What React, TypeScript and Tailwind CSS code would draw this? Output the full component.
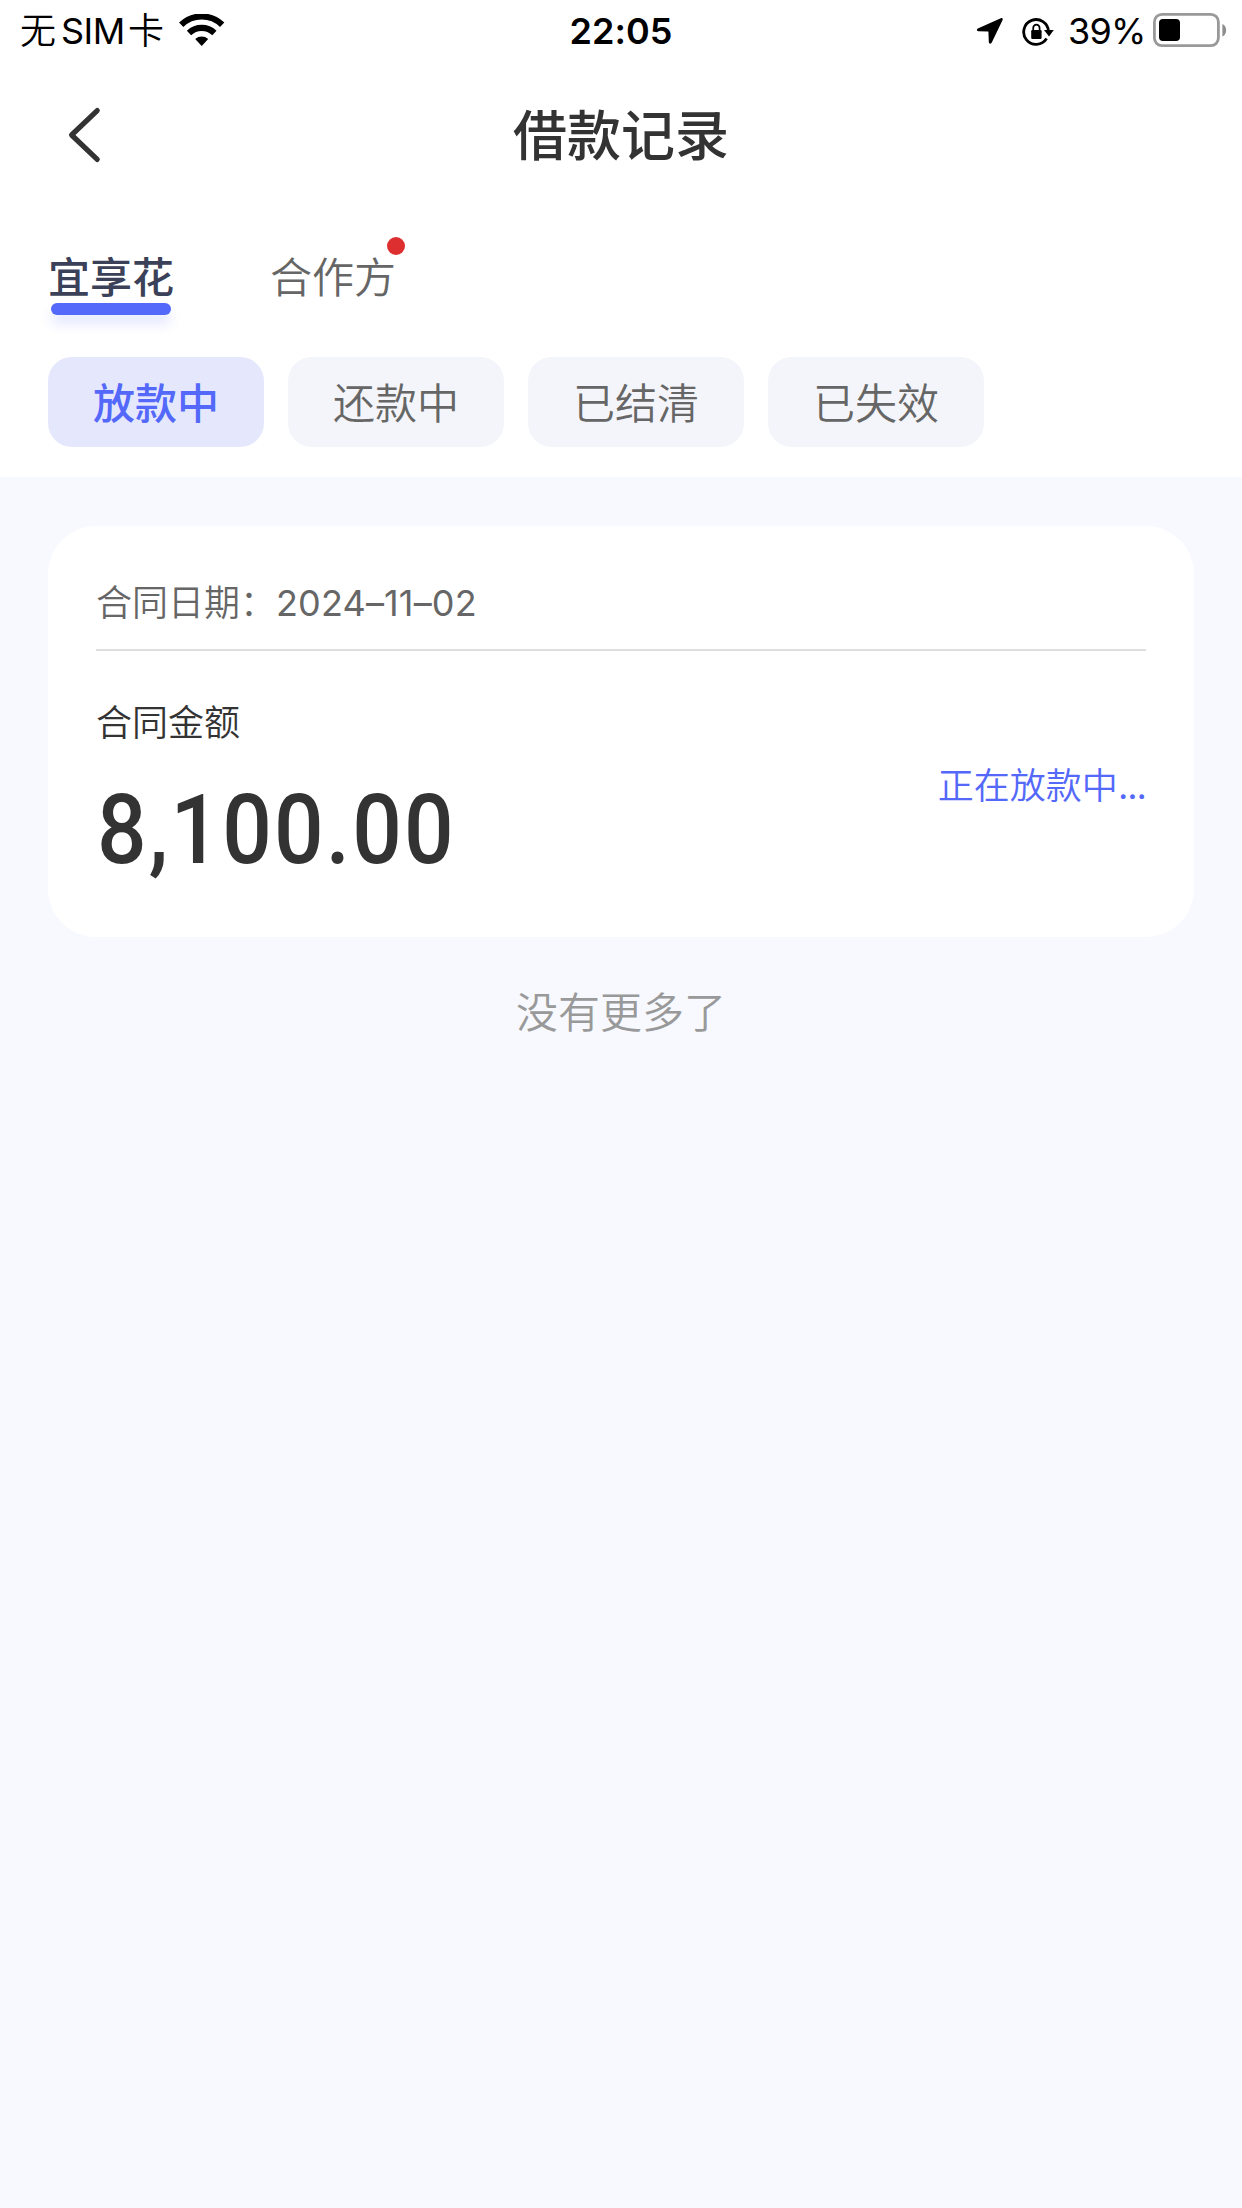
import React from "react";

const filters = ["放款中", "还款中", "已结清", "已失效"];

function WifiIcon() {
  return (
    <svg className="ml-[15px] h-[34px] w-[46px]" viewBox="0 0 46 34" fill="none">
      <path d="M2.2 10.8 A29.5 29.5 0 0 1 43.2 10.8" stroke="#000" strokeWidth="6.2" />
      <path d="M10 18.9 A18.4 18.4 0 0 1 35.4 18.9" stroke="#000" strokeWidth="6.2" />
      <path d="M16.2 25 A10 10 0 0 1 29.2 25 L22.7 32 Z" fill="#000" />
    </svg>
  );
}

function LocationIcon() {
  return (
    <svg className="-mt-[2px] mr-px h-[28px] w-[28px]" viewBox="0 0 28 28">
      <path
        d="M24.8 1.2 L1.8 11.6 C0.3 12.4 0.6 14.2 2.3 14.3 L12.4 14.5 L12.8 25 C12.9 27 15 27.2 15.8 25.6 L26.6 3 C27.2 1.6 26.2 0.6 24.8 1.2 Z"
        fill="#000"
      />
    </svg>
  );
}

function RotationLockIcon() {
  return (
    <svg className="ml-[17px] h-[30px] w-[32px]" viewBox="0 0 32 30" fill="none">
      <path d="M26.5 14.5 A12.4 12.4 0 1 0 24.6 21.6" stroke="#000" strokeWidth="2.8" />
      <path d="M22 13 H31.8 L27 19.6 Z" fill="#000" />
      <rect x="9.2" y="13" width="10.4" height="9" rx="1.2" fill="#000" />
      <path d="M11.2 13.5 V11 A3.2 3.4 0 0 1 17.6 11 V13.5" stroke="#000" strokeWidth="1.7" />
    </svg>
  );
}

function BatteryIcon() {
  return (
    <svg className="-mt-[4px] ml-[8px] h-[36px] w-[75px]" viewBox="0 0 75 36" fill="none">
      <rect x="1.4" y="2.4" width="64" height="31.2" rx="7.5" stroke="#999" strokeWidth="2.8" />
      <rect x="6" y="7" width="21" height="22" rx="4" fill="#000" />
      <path d="M69.4 12 C74.4 13.6 74.4 22.8 69.4 24.4 Z" fill="#8e8e8e" />
    </svg>
  );
}

export default function App() {
  return (
    <div className="flex h-[2208px] w-[1242px] flex-col overflow-hidden bg-[#f8f9ff] font-['Inter','Noto_Sans_CJK_SC',sans-serif] text-[#333333]">
      <header className="h-[477px] shrink-0 bg-white">
        <div className="grid h-[60px] grid-cols-[1fr_auto_1fr] items-center text-[36px] leading-[60px] text-black">
          <div className="flex items-center pl-[20px] pt-[1px]">
            <span className="font-[350]">无</span>
            <span className="ml-[5px] w-[63px] tracking-[-0.5px]">SIM</span>
            <span className="ml-[4px] font-[350]">卡</span>
            <WifiIcon />
          </div>
          <div className="pt-px font-semibold tracking-[0.1px]">22:05</div>
          <div className="flex items-center justify-end pr-[14px] pt-[2px]">
            <LocationIcon />
            <RotationLockIcon />
            <span className="-mt-px ml-[14px] w-[77px] tracking-[-0.8px]">39%</span>
            <BatteryIcon />
          </div>
        </div>

        <div className="grid h-[150px] grid-cols-[1fr_auto_1fr] items-center">
          <button className="ml-[66px] w-[36px]" aria-label="返回">
            <svg className="h-[60px] w-[36px]" viewBox="0 0 36 60" fill="none">
              <path
                d="M31.2 5.6 L5.6 30 L31.2 54.4"
                stroke="#333"
                strokeWidth="5.2"
                strokeLinecap="round"
                strokeLinejoin="round"
              />
            </svg>
          </button>
          <h1 className="pt-[3px] text-[54px] font-medium leading-[80px]">借款记录</h1>
        </div>

        <nav className="flex gap-[96px] pl-[48px] pt-[38px] text-[42px] leading-[60px]">
          <div className="flex w-[126px] flex-col items-center">
            <span className="font-medium text-[#3b4158]">宜享花</span>
            <span className="-mt-[5px] h-[12px] w-[120px] rounded-full bg-[#5468fa] shadow-[0_9px_12px_rgba(84,104,250,0.16)]" />
          </div>
          <div className="relative font-[350] text-[#666666]">
            合作方
            <span className="absolute -right-[9px] -top-[11px] h-[18px] w-[18px] rounded-full bg-[#dd2f30]" />
          </div>
        </nav>

        <div className="mt-[42px] flex gap-[24px] pl-[48px]">
          {filters.map((label, i) => (
            <button
              key={label}
              className={
                i === 0
                  ? "h-[90px] w-[216px] rounded-[24px] bg-[#e5e8fd] pt-[3px] text-[42px] font-medium leading-[87px] text-[#5468fa]"
                  : "h-[90px] w-[216px] rounded-[24px] bg-[#f4f5fa] pt-[3px] text-[42px] font-[350] leading-[87px] text-[#666666]"
              }
            >
              {label}
            </button>
          ))}
        </div>
      </header>

      <main className="px-[48px] pt-[49px]">
        <section className="h-[411px] rounded-[48px] bg-white px-[48px]">
          <div className="flex h-[125px] items-center border-b-2 border-[#dfdfdf] pt-[30px] text-[36px] font-[350] leading-[54px] text-[#666666]">
            <span>合同日期：</span>
            <span className="font-normal tracking-[0.15px]">2024–11–02</span>
          </div>
          <div className="flex h-[270px] items-center justify-between">
            <div>
              <div className="text-[36px] font-[350] leading-[54px]">合同金额</div>
              <div className="mb-[-4px] ml-px mt-[30px] h-[100px] w-[360px] origin-left scale-x-[0.9] whitespace-nowrap font-['Roboto',sans-serif] text-[97px] font-medium leading-[100px] tracking-[2.4px]">
                8,100.00
              </div>
            </div>
            <div className="text-[36px] font-[350] leading-[54px] text-[#5468fa]">
              正在放款中<span className="font-normal tracking-[-1px]">...</span>
            </div>
          </div>
        </section>
        <p className="mt-[46px] text-center text-[42px] font-[350] leading-[60px] text-[#999999]">没有更多了</p>
      </main>
    </div>
  );
}
